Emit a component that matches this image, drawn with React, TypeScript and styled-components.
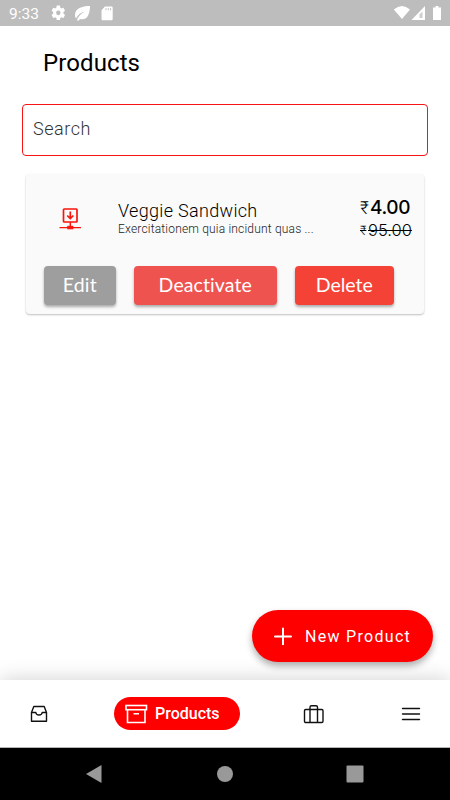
import React from "react";
import styled, { createGlobalStyle } from "styled-components";

const GlobalStyle = createGlobalStyle`
  * { box-sizing: border-box; }
  html, body { margin: 0; padding: 0; background: #fff; }
  body { font-family: Roboto, "Liberation Sans", sans-serif; color: #000; }
  button { font: inherit; border: 0; margin: 0; padding: 0; }
  svg { display: block; flex: none; }
`;

const Screen = styled.div`
  width: 450px;
  height: 800px;
  display: flex;
  flex-direction: column;
  overflow: hidden;
  background: #fff;
`;

const StatusBar = styled.header`
  flex: none;
  height: 26px;
  background: #bdbdbd;
  color: #fff;
  display: flex;
  align-items: center;
  padding-left: 9px;
`;

const Clock = styled.span`
  width: 42px;
  font-size: 15.5px;
  line-height: 26px;
  padding-top: 1px;
`;

const StatusIcons = styled.div<{ $end?: boolean }>`
  display: flex;
  align-items: center;
  height: 26px;
  margin-left: ${(p) => (p.$end ? "auto" : "0")};
`;

const Content = styled.main`
  flex: 1;
  min-height: 0;
  display: flex;
  flex-direction: column;
`;

const Title = styled.h1`
  margin: 22px 0 0 43px;
  height: 31px;
  font-size: 24px;
  line-height: 30px;
  font-weight: 400;
  letter-spacing: 0.1px;
`;

const SearchInput = styled.input`
  display: block;
  margin: 25px 22px 0;
  height: 52px;
  padding: 0 10px 3px;
  border: 1px solid #f81414;
  border-radius: 4px;
  background: #fff;
  outline: 0;
  font: 300 18px Roboto, sans-serif;
  letter-spacing: 0.55px;
  &::placeholder { color: #333; opacity: 1; }
`;

const Card = styled.article`
  margin: 18px 26px 0;
  height: 140px;
  border-radius: 4px;
  background: #fafafa;
  box-shadow: 0 1px 2px rgba(0, 0, 0, 0.26);
`;

const ProductRow = styled.div`
  display: flex;
  height: 92px;
  padding: 0 0 0 33px;
`;

const Thumb = styled.div`
  width: 59px;
  padding-top: 33px;
`;

const Details = styled.div`
  width: 242px;
  padding-top: 25px;
`;

const ProductName = styled.div`
  font-size: 18px;
  line-height: 23px;
  font-weight: 300;
  letter-spacing: 0.32px;
  white-space: nowrap;
`;

const Description = styled.div`
  font-size: 12px;
  line-height: 14px;
  font-weight: 300;
  color: #222;
  letter-spacing: 0.18px;
  white-space: nowrap;
`;

const Prices = styled.div`
  padding-top: 21px;
`;

const Price = styled.div<{ $old?: boolean }>`
  height: ${(p) => (p.$old ? "22px" : "24px")};
  display: flex;
  align-items: center;
  white-space: nowrap;
  font-family: Inter, sans-serif;
  font-size: ${(p) => (p.$old ? "16.5px" : "19px")};
  font-weight: ${(p) => (p.$old ? 300 : 500)};
  letter-spacing: ${(p) => (p.$old ? "0px" : "-0.4px")};
`;

const Amount = styled.span<{ $old?: boolean }>`
  text-decoration: ${(p) => (p.$old ? "line-through" : "none")};
  text-decoration-thickness: 1px;
`;

const Rupee = styled.span<{ $old?: boolean }>`
  width: ${(p) => (p.$old ? "8px" : "10px")};
  font-size: ${(p) => (p.$old ? "13px" : "18px")};
  font-weight: 300;
  font-family: Roboto, "Noto Sans", sans-serif;
  letter-spacing: 0;
  text-decoration: ${(p) => (p.$old ? "line-through" : "none")};
`;

const Actions = styled.div`
  display: flex;
  padding-left: 17.5px;
`;

const ActionButton = styled.button<{ $bg: string; $width: number; $gap: number; $track: number }>`
  width: ${(p) => p.$width}px;
  height: 39px;
  margin-right: ${(p) => p.$gap}px;
  border-radius: 4px;
  background: ${(p) => p.$bg};
  color: #fff;
  font: 400 19.5px Lato, sans-serif;
  letter-spacing: ${(p) => p.$track}px;
  padding-bottom: 2px;
  box-shadow: 0 2px 3px rgba(0, 0, 0, 0.32);
`;

const Fab = styled.button`
  margin: auto 17.5px 18px auto;
  width: 180.5px;
  height: 52px;
  border-radius: 26px;
  background: #f00;
  color: #fff;
  display: flex;
  align-items: center;
  padding-left: 22px;
  gap: 13px;
  font-size: 16px;
  letter-spacing: 1.3px;
  white-space: nowrap;
  box-shadow: 0 4px 7px rgba(0, 0, 0, 0.32);
`;

const BottomNav = styled.nav`
  flex: none;
  height: 68px;
  background: #fff;
  border-bottom: 1px solid #b5b5b5;
  box-shadow: 0 0 20px rgba(0, 0, 0, 0.19);
  display: flex;
  align-items: center;
  padding-left: 28px;
  gap: 63.5px;
`;

const NavItem = styled.button<{ $push?: number }>`
  background: none;
  width: 22px;
  margin-left: ${(p) => p.$push ?? 0}px;
  display: flex;
  justify-content: center;
`;

const ActivePill = styled.button`
  width: 126px;
  height: 33px;
  border-radius: 17px;
  background: #f00;
  color: #fff;
  display: flex;
  align-items: center;
  padding-left: 11px;
  gap: 7.5px;
  font-size: 16px;
  font-weight: 500;
  white-space: nowrap;
`;

const SystemBar = styled.footer`
  flex: none;
  height: 52px;
  background: #000;
  display: flex;
  align-items: center;
  justify-content: space-between;
  padding: 0 86px 0 85px;
`;

export default function App() {
  return (
    <Screen>
      <GlobalStyle />
      <StatusBar>
        <Clock>9:33</Clock>
        <StatusIcons>
          <svg width="63" height="16" viewBox="0 0 63 16" fill="#fff">
            <path transform="translate(-1.2 -1.3) scale(.71 .76)" d="M19.14 12.94c.04-.3.06-.61.06-.94s-.02-.64-.07-.94l2.03-1.58a.49.49 0 0 0 .12-.61l-1.92-3.32a.49.49 0 0 0-.59-.22l-2.39.96a7 7 0 0 0-1.62-.94l-.36-2.54a.48.48 0 0 0-.48-.41h-3.84a.47.47 0 0 0-.47.41l-.36 2.54c-.59.24-1.13.57-1.62.94l-2.39-.96a.48.48 0 0 0-.59.22L2.74 8.87a.47.47 0 0 0 .12.61l2.03 1.58a6 6 0 0 0-.02 1.88l-2.03 1.58a.49.49 0 0 0-.12.61l1.92 3.32c.12.22.37.29.59.22l2.39-.96c.5.38 1.03.7 1.62.94l.36 2.54c.05.24.24.41.48.41h3.84c.24 0 .44-.17.47-.41l.36-2.54a7 7 0 0 0 1.62-.94l2.39.96c.22.08.47 0 .59-.22l1.92-3.32a.47.47 0 0 0-.12-.61zM12 15.1A3.1 3.1 0 1 1 12 8.9a3.1 3.1 0 0 1 0 6.2z" />
            <path d="M39 1C31 1 24 3.500 24 10c0 1.500.4 2.500 1.200 3.300C27 9.500 30 7.500 34 6.500c-4 2-7 5-8.200 9H28l.8-1.600c6.200 1.800 10-2.500 10.200-12.900z" />
            <path d="M54 1.500h6.500a1.200 1.200 0 0 1 1.200 1.200V14a1.200 1.200 0 0 1-1.200 1.200h-8.300A1.200 1.200 0 0 1 50.500 14V5.200z" />
            <path d="M55 3.200v2M57.300 3.200v2M59.600 3.200v2" stroke="#bdbdbd" strokeWidth="1" />
          </svg>
        </StatusIcons>
        <StatusIcons $end>
          <svg width="57" height="18" viewBox="393 4 57 18" fill="#fff">
            <path d="M393.800 9.500Q402 2.500 410 9.500L402 19z" />
            <path d="M425 6v14h-13.500z" />
            <path d="M422.500 11.500V18h-3v-3.500z" fill="#bdbdbd" opacity=".75" />
            <path d="M435.500 6h3v1.500h2.500v12.500h-8V7.500h2.500z" />
          </svg>
        </StatusIcons>
      </StatusBar>

      <Content>
        <Title>Products</Title>
        <SearchInput placeholder="Search" />
        <Card>
          <ProductRow>
            <Thumb>
              <svg width="23" height="24" viewBox="0 0 23 24" fill="none" stroke="#f8150c">
                <rect x="4.500" y="2" width="13.500" height="13" rx=".7" strokeWidth="1.700" />
                <path d="M11.300 4.500v7M8.200 8.500l3.100 3 3.100-3" strokeWidth="1.700" />
                <path d="M11.300 15v5M.5 20.600H22" strokeWidth="1.400" />
                <rect x="8.800" y="19.300" width="5" height="2.500" fill="#f8150c" strokeWidth="1" />
              </svg>
            </Thumb>
            <Details>
              <ProductName>Veggie Sandwich</ProductName>
              <Description>Exercitationem quia incidunt quas ...</Description>
            </Details>
            <Prices>
              <Price><Rupee>₹</Rupee><Amount>4.00</Amount></Price>
              <Price $old><Rupee $old>₹</Rupee><Amount $old>95.00</Amount></Price>
            </Prices>
          </ProductRow>
          <Actions>
            <ActionButton $bg="#9e9e9e" $width={72.5} $gap={17.5} $track={0.2}>Edit</ActionButton>
            <ActionButton $bg="#ef5350" $width={143.5} $gap={18} $track={0.1}>Deactivate</ActionButton>
            <ActionButton $bg="#f44336" $width={98.5} $gap={0} $track={0}>Delete</ActionButton>
          </Actions>
        </Card>
        <Fab>
          <svg width="18" height="18" viewBox="0 0 18 18" stroke="#fff" strokeWidth="2" strokeLinecap="round">
            <path d="M9 1.500v16M1 9.500h16" />
          </svg>
          <span>New Product</span>
        </Fab>
      </Content>

      <BottomNav>
        <NavItem aria-label="Orders">
          <svg width="18" height="18" viewBox="0 0 18 18" fill="none" stroke="#111" strokeWidth="1.400" strokeLinejoin="round">
            <path d="M1.500 7.500 3.800 1.500h10.400l2.300 6v8.800h-15zM1.500 7.500h4.300c.3 3.300 6.100 3.300 6.400 0h4.300" />
          </svg>
        </NavItem>
        <ActivePill>
          <svg width="23" height="20" viewBox="0 0 23 20" fill="none" stroke="#fff" strokeWidth="1.600">
            <rect x="1" y="1.500" width="20.500" height="4.200" />
            <path d="M2.500 5.700v12.800H20V5.700M8.500 9.800h5.500" />
          </svg>
          <span>Products</span>
        </ActivePill>
        <NavItem aria-label="Business">
          <svg width="22" height="20" viewBox="0 0 22 20" fill="none" stroke="#111" strokeWidth="1.400">
            <rect x="1.500" y="5.500" width="18.500" height="13" rx="1.200" />
            <path d="M7 18.500V3.200c0-1 .5-1.500 1.500-1.500H13c1 0 1.500.5 1.500 1.500v15.300" />
          </svg>
        </NavItem>
        <NavItem aria-label="Menu" $push={11}>
          <svg width="20" height="16" viewBox="0 0 20 16" stroke="#111" strokeWidth="1.400" strokeLinecap="round">
            <path d="M1.500 2.500h17M1.500 8h17M1.500 13.500h17" />
          </svg>
        </NavItem>
      </BottomNav>
      <SystemBar>
        <svg width="18" height="20" viewBox="0 0 18 20" fill="#999"><path d="M1 10 16.500 1v18z" /></svg>
        <svg width="18" height="18" viewBox="0 0 18 18" fill="#999"><circle cx="9" cy="9" r="8" /></svg>
        <svg width="18" height="18" viewBox="0 0 18 18" fill="#999"><rect x=".5" y=".5" width="17" height="17" rx="1" /></svg>
      </SystemBar>
    </Screen>
  );
}
